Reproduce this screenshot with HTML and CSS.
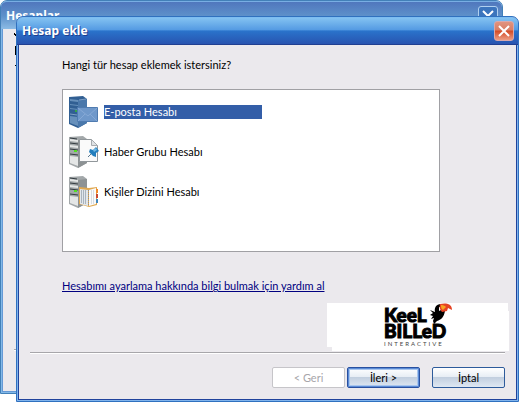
FILE: index.html
```html
<!DOCTYPE html>
<html lang="tr">
<head>
  <meta charset="UTF-8" />
  <meta name="viewport" content="width=device-width, initial-scale=1.0"/>
  <title>Hesap ekle</title>
  <link rel="stylesheet" href="styles.css">
</head>
<body>
  <div class="window back">
    <div class="titlebar">
      <span class="title">Hesaplar</span>
      <button class="close" aria-label="Kapat">
        <svg viewBox="0 0 18 18"><path d="M4 4l10 10M14 4L4 14"/></svg>
      </button>
    </div>
    <div class="back-body">
      <svg class="back-marks" viewBox="0 0 4 50">
        <path d="M0 4h1v1h1v2H1V6H0zM1 17h1v9H1zM1 36h1v1H1z"/>
      </svg>
      <hr class="line">
    </div>
  </div>

  <form class="window front">
    <div class="titlebar">
      <span class="title">Hesap ekle</span>
      <button type="button" class="close" aria-label="Kapat">
        <svg viewBox="0 0 18 18"><path d="M4 4l10 10M14 4L4 14"/></svg>
      </button>
    </div>
    <div class="content">
      <p class="question" id="question">Hangi tür hesap eklemek istersiniz?</p>
      <div class="list" role="listbox" aria-labelledby="question">
        <button type="button" class="item selected" role="option" aria-selected="true">
          <svg class="icon" viewBox="0 0 32 32">
            <path fill="#315f93" d="M1 1l14-1 4 3v24l-9 5-9-4z"/>
            <path fill="#4a78ab" d="M10 4l9-1v24l-9 5z"/>
            <path fill="#6790bb" d="M2 3l8 1v2l-8-1zM2 8l8 1v1l-8-1zM2 12l8 1v1l-8-1zM2 20l8 1v9l-8-3z"/>
            <path stroke="#7f9fc4" d="M2 18l7 1M11 4l7-1"/>
            <path fill="#36a548" d="M7 14h2v2H7z"/>
            <path fill="#6f98ca" stroke="#4f7bb0" d="M9.500 11.500h20v14h-20z"/>
            <path fill="none" stroke="#86a9d6" d="M10 12l10 8 9-8M10 25l7-7M29 25l-7-7"/>
          </svg>
          <span class="label">E-posta Hesabı</span>
        </button>
        <button type="button" class="item" role="option" aria-selected="false">
          <svg class="icon" viewBox="0 0 32 32">
            <path fill="#a3a8aa" d="M1 1l14-1 4 3v24l-9 5-9-4z"/>
            <path fill="#8d9294" d="M10 4l9-1v24l-9 5z"/>
            <path fill="#e4e6e6" d="M2 3l8 1v2l-8-1zM2 9l8 1v2l-8-1zM2 20l8 1v9l-8-3z"/>
            <path fill="none" stroke="#333b40" d="M2 2l7 1M2 7l8 1M2 13l8 1M2 18l8 1"/>
            <path fill="#52df22" d="M6 14h3v2H6z"/>
            <path fill="#fafafa" stroke="#91979b" d="M11.500 3.500h12l6 6v16h-18z"/>
            <path fill="#dfe2e4" stroke="#a7abae" d="M23.500 3.500v6h6z"/>
            <path stroke="#56768e" d="M20 21l4-4"/>
            <path fill="#237ebd" d="M22 13l3 1 3-3 3 4-3 2v4l-3-1-4-4z"/>
            <path fill="#71b9e4" d="M25 14l3-2 1 2-3 2z"/>
          </svg>
          <span class="label">Haber Grubu Hesabı</span>
        </button>
        <button type="button" class="item" role="option" aria-selected="false">
          <svg class="icon" viewBox="0 0 32 32">
            <path fill="#a3a8aa" d="M1 1l14-1 4 3v24l-9 5-9-4z"/>
            <path fill="#8d9294" d="M10 4l9-1v24l-9 5z"/>
            <path fill="#e4e6e6" d="M2 3l8 1v2l-8-1zM2 9l8 1v2l-8-1zM2 20l8 1v9l-8-3z"/>
            <path fill="none" stroke="#333b40" d="M2 2l7 1M2 7l8 1M2 13l8 1M2 18l8 1"/>
            <path fill="#52df22" d="M6 14h3v2H6z"/>
            <path fill="#e0a850" d="M11 11l10 1 8-1v18l-8 2-10-3z"/>
            <path fill="#e1e6eb" d="M12 13l8 1v16l-8-2z"/>
            <path fill="#fafafa" d="M21 14l7-2v16l-7 2z"/>
            <path fill="none" stroke="#8b8f94" stroke-dasharray="1 1" d="M20.500 14v16"/>
            <path fill="none" stroke="#a9b3bd" d="M13.500 14v13M15.500 14v14M17.500 14v14"/>
            <path fill="none" stroke="#d8dee4" d="M23.500 14v14M25.500 14v14"/>
            <path fill="#f18a29" d="M28 13h2v4h-2z"/>
            <path fill="#cb4832" d="M28 18h2v4h-2z"/>
            <path fill="#3f86bd" d="M28 23h2v4h-2z"/>
          </svg>
          <span class="label">Kişiler Dizini Hesabı</span>
        </button>
      </div>
      <a class="help" href="#">Hesabımı ayarlama hakkında bilgi bulmak için yardım al</a>
    </div>
    <div class="footer">
      <div class="brand">
        <svg class="logo" viewBox="0 0 70 46" role="img" aria-label="Keel Billed Interactive">
          <text class="logo-big" x="0" y="17">KeeL</text>
          <text class="logo-big" x="0" y="33">BILLeD</text>
          <text class="logo-small" x="0" y="41">INTERACTIVE</text>
          <path d="M51 7c-1-4 1-8 6-8 3 0 5 3 4 7-1 6-4 9-8 10l-3 3-1-3 1-3-3 1 2-3-3-1 3-2-3-3z"/>
          <path fill="#fff" d="M55 2c2 0 3 1 2 3l-2 1z"/>
          <path fill="#e54324" d="M56-1c5-1 12-1 12 6l-4-2-1 3-5 1c-2-2-3-5-2-8z"/>
          <path fill="#f7a421" d="M57 0c3 0 4 1 5 2l-3 3c-2-1-2-3-2-5z"/>
        </svg>
      </div>
      <hr class="line">
      <div class="buttons">
        <button type="button" disabled>&lt; Geri</button>
        <button type="submit" class="default">İleri &gt;</button>
        <button type="button" class="cancel">İptal</button>
      </div>
    </div>
  </form>
</body>
</html>
```
FILE: styles.css
```css
* {
  box-sizing: border-box;
}

body {
  margin: 0;
  min-height: 100vh;
  background: #fff;
  color: #000;
  font-family: Lato, "Liberation Sans", sans-serif;
  font-size: 11px;
  line-height: 14px;
  overflow: hidden;
}

button {
  font: inherit;
  padding: 0;
}

/* windows on the desktop */
.window {
  position: absolute;
  display: flex;
  flex-direction: column;
  background: #ebe9ed;
  border-radius: 7px 7px 0 0;
  overflow: hidden;
}

.back {
  inset: 0 16px 8px 0;
  border: 1px solid #4280b8;
  box-shadow: inset 0 0 0 1px #83b9e8, inset 0 0 0 2px #6599d6;
}

.front {
  inset: 16px 0 0 16px;
  border: 1px solid #3071bf;
  box-shadow: inset 0 0 0 1px #80b4ed, inset 0 0 0 2px #20439c;
}

.titlebar {
  display: flex;
  justify-content: space-between;
  align-items: center;
  flex: none;
  height: 28px;
  padding: 0 4px 0 5px;
  border-radius: 6px 6px 0 0;
  color: #fff;
}

.front .titlebar {
  border-top: 1px solid #7dbcf0;
  border-bottom: 1px solid #203f91;
  background: linear-gradient(#83c2f1, #559be3 45%, #2a73cb 50%, #2854b0);
}

.back .titlebar {
  border-top: 1px solid #78aee3;
  background: linear-gradient(#5077bd, #5e91ca 52%, #8bbbe5);
}

.title {
  font-family: "Noto Sans", sans-serif;
  font-size: 12px;
  font-weight: 700;
  line-height: 14px;
  text-shadow: 1px 1px #1e3e8f;
}

.back .title {
  text-shadow: none;
}

.close {
  width: 20px;
  height: 20px;
  border: 1px solid #d9a8ac;
  border-radius: 3px;
  background: linear-gradient(#e1937f, #d97d64 45%, #d34a25 50%, #ed9d83);
}

.back .close {
  border-color: #b0d0f0;
  background: #3c75bd;
}

.close svg {
  display: block;
  fill: none;
  stroke: #fff;
  stroke-width: 2;
}

.back-body {
  display: flex;
  flex: 1;
  flex-direction: column;
  justify-content: space-between;
  padding: 0 13px 42px;
}

.back-marks {
  width: 4px;
  height: 50px;
}

.content {
  padding: 13px 78px 0 45px;
}

.question {
  margin: 0 0 17px;
}

.list {
  min-height: 163px;
  padding: 6px 5px;
  border: 1px solid #a0a0a4;
  background: #fff;
}

.item {
  display: flex;
  align-items: center;
  gap: 4px;
  width: 100%;
  height: 32px;
  margin-bottom: 8px;
  border: 0;
  background: none;
  color: #000;
  text-align: left;
}

.icon {
  width: 32px;
  height: 32px;
}

.label {
  min-width: 158px;
}

.selected .label {
  background: #335ea8;
  color: #fff;
}

.help {
  display: block;
  margin-top: 27px;
  color: #000080;
}

.footer {
  margin-top: auto;
  padding: 0 13px 13px;
}

.brand {
  display: flex;
  width: 182px;
  height: 48px;
  margin: 0 -4px 0 auto;
  padding: 2px 0 0 57px;
  background: #fff;
  clip-path: polygon(0 0, 181px 0, 181px 8px, 100% 8px, 100% 100%, 5px 100%, 5px 44px, 0 44px);
}

.logo {
  width: 70px;
  height: 46px;
  overflow: visible;
}

.logo-big {
  stroke: #000;
  font-size: 19px;
  font-weight: 900;
}

.logo-small {
  fill: #444;
  font-size: 6px;
  letter-spacing: 2px;
}

.line {
  height: 2px;
  margin: 0;
  border: 0;
  border-top: 1px solid #a7a6aa;
  background: #fff;
}

.footer .line {
  margin-top: 1px;
}

.buttons {
  display: flex;
  justify-content: flex-end;
  gap: 2px;
  margin-top: 13px;
}

.buttons button {
  width: 73px;
  height: 21px;
  border: 1px solid #2d5b9b;
  border-radius: 2px;
  background: linear-gradient(#fff, #e8eef5 45%, #c2cfdf 50%, #dfe8f3);
  color: #000;
}

.buttons .default {
  border-color: #2850a0;
  box-shadow: inset 0 0 0 1px #5b8bd6, inset 0 0 0 2px #a9c6ee;
}

.buttons .cancel {
  margin-left: 10px;
}

.buttons button:disabled {
  border-color: #c6c5c9;
  background: #fff;
  color: #a7a6aa;
}
```
